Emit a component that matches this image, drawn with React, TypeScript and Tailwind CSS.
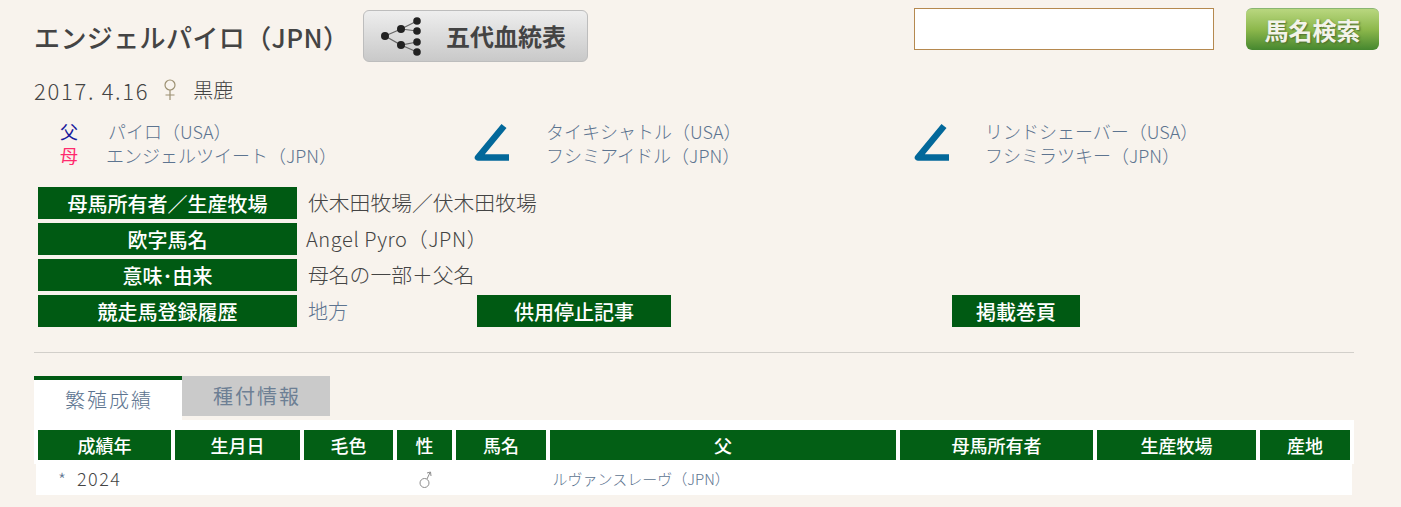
import React from "react";

const font = { fontFamily: '"Noto Sans CJK JP", sans-serif' };

const columns = [
  { label: "成績年", w: "w-[133px]" },
  { label: "生月日", w: "w-[125px]" },
  { label: "毛色", w: "w-[89px]" },
  { label: "性", w: "w-[55px]" },
  { label: "馬名", w: "w-[90px]" },
  { label: "父", w: "w-[346px]" },
  { label: "母馬所有者", w: "w-[193px]" },
  { label: "生産牧場", w: "w-[159px]" },
  { label: "産地", w: "w-[90px]" },
];

function Angle() {
  return (
    <svg width="36" height="40" viewBox="0 0 36 40" className="shrink-0">
      <path d="M31 3 L5 34.5 H36" fill="none" stroke="#03689a" strokeWidth="6.5" strokeLinejoin="round" />
    </svg>
  );
}

function Tree() {
  const ends = [[37, 7], [37, 17], [37, 28], [37, 38]];
  return (
    <svg width="42" height="44" viewBox="0 0 42 44" className="shrink-0">
      <path d="M5 22 L21 15 L37 7 M21 15 L37 17 M5 22 L21 31 L37 28 M21 31 L37 38" fill="none" stroke="#666" strokeWidth="1.2" />
      <g fill="#222">
        <circle cx="5" cy="22" r="4" />
        <circle cx="21" cy="15" r="4" />
        <circle cx="21" cy="31" r="4" />
        {ends.map(([x, y]) => (
          <circle key={y} cx={x} cy={y} r="3.8" />
        ))}
      </g>
    </svg>
  );
}

function Female() {
  return (
    <svg width="14" height="22" viewBox="0 0 14 22" className="shrink-0">
      <g fill="none" stroke="#9c9072" strokeWidth="1.2">
        <circle cx="7" cy="6" r="5" />
        <path d="M7 11 V21 M2.5 16 H11.5" />
      </g>
    </svg>
  );
}

function Male() {
  return (
    <svg width="14" height="18" viewBox="0 0 14 18" className="shrink-0">
      <g fill="none" stroke="#8c8c8c" strokeWidth="1">
        <circle cx="5.5" cy="12" r="4.5" />
        <path d="M8 8 L11 1.5 M8 2 L11.5 1 L12 5" />
      </g>
    </svg>
  );
}

function Label({ children, w }: { children: React.ReactNode; w: string }) {
  return (
    <div className={`${w} h-8 bg-[#005a13] text-white text-[20px] font-medium flex items-center justify-center shrink-0 pt-[2px] whitespace-nowrap`}>
      {children}
    </div>
  );
}

function Pair({ top, bottom, className }: { top: string; bottom: string; className: string }) {
  return (
    <div className={`${className} text-[18px] font-light leading-[24px] text-[#5d7490] whitespace-nowrap`}>
      <div>{top}</div>
      <div>{bottom}</div>
    </div>
  );
}

export default function App() {
  return (
    <div style={font} className="w-[1401px] h-[507px] overflow-hidden bg-[#f8f3ed] text-[#444]">
      <div className="flex items-start pl-[34px] pt-2">
        <h1 className="w-[329px] text-[26px] font-medium leading-[58px] tracking-[0.4px] text-[#444] whitespace-nowrap">
          {"エンジェルパイロ\uFF08JPN\uFF09"}
        </h1>
        <button className="w-[225px] h-[52px] mt-[2px] rounded-[6px] border border-[#bdbdbd] bg-gradient-to-b from-[#eeeeee] to-[#c9c9c9] flex items-center pl-[16px]">
          <Tree />
          <span className="ml-[24px] text-[24px] font-bold text-[#444] whitespace-nowrap">五代血統表</span>
        </button>
        <input aria-label="馬名" className="ml-[326px] w-[300px] h-[42px] bg-white border border-[#b5894f]" />
        <button className="ml-[32px] w-[133px] h-[42px] rounded-[6px] bg-gradient-to-b from-[#b9d77f] via-[#8db84c] to-[#45872f] border-t border-[#8ab672] text-[#f3f3ea] text-[24px] font-bold [text-shadow:1px_1px_2px_#4a6a2a]">
          馬名検索
        </button>
      </div>

      <div className="flex items-center pl-[34px] mt-[9px] h-[30px] text-[22px] font-light whitespace-nowrap">
        <span className="tracking-[1.7px]">2017. 4.16</span>
        <span className="ml-[14px]"><Female /></span>
        <span className="ml-[16px] text-[20px]">黒鹿</span>
      </div>

      <div className="flex items-center h-[48px] mt-[14px]">
        <div className="pl-[60px] w-[106px] text-[18px] leading-[24px] font-normal shrink-0">
          <div className="text-[#1a1a9c]">父</div>
          <div className="text-[#ff2a6d]">母</div>
        </div>
        <div className="w-[367px] text-[18px] font-light leading-[24px] text-[#5d7490] whitespace-nowrap shrink-0">
          <div className="pl-[2px]">{"パイロ\uFF08USA\uFF09"}</div>
          <div>{"エンジェルツイート\uFF08JPN\uFF09"}</div>
        </div>
        <Angle />
        <Pair className="ml-[37px] w-[367px] shrink-0" top={"タイキシャトル\uFF08USA\uFF09"} bottom={"フシミアイドル\uFF08JPN\uFF09"} />
        <Angle />
        <Pair className="ml-[36px]" top={"リンドシェーバー\uFF08USA\uFF09"} bottom={"フシミラツキー\uFF08JPN\uFF09"} />
      </div>

      <div className="flex flex-col gap-1 pl-[38px] mt-[20px] text-[20.8px] font-light">
        <div className="flex items-center">
          <Label w="w-[259px]">{"母馬所有者\uFF0F生産牧場"}</Label>
          <span className="ml-[11px]">{"伏木田牧場\uFF0F伏木田牧場"}</span>
        </div>
        <div className="flex items-center">
          <Label w="w-[259px]">欧字馬名</Label>
          <span className="ml-[9px] text-[20px] tracking-[0.6px]">{"Angel Pyro\uFF08JPN\uFF09"}</span>
        </div>
        <div className="flex items-center">
          <Label w="w-[259px]">{"意味\uFF65由来"}</Label>
          <span className="ml-[11px]">{"母名の一部\uFF0B父名"}</span>
        </div>
        <div className="flex items-center">
          <Label w="w-[259px]">競走馬登録履歴</Label>
          <span className="ml-[11px] w-[169px] text-[20px] text-[#5d7490]">地方</span>
          <Label w="w-[194px]">供用停止記事</Label>
          <div className="w-[281px]" />
          <Label w="w-[128px]">掲載巻頁</Label>
        </div>
      </div>

      <div className="ml-[34px] w-[1320px] mt-[25px] border-t border-[#d2cfca]" />

      <div className="flex items-start ml-[34px] mt-[23px]">
        <div className="w-[148px] h-[44px] border-t-4 border-[#005a13] bg-white text-[20px] font-light tracking-[2px] text-[#5d7490] flex items-center justify-center pl-[2px]">
          繁殖成績
        </div>
        <div className="w-[148px] h-[40px] bg-[#cacaca] text-[20px] font-normal tracking-[2px] text-[#6d7f94] flex items-center justify-center pl-[2px]">
          種付情報
        </div>
      </div>

      <div className="ml-[34px] w-[1320px] bg-white pt-[10px] pb-[4px] pl-[4px]">
        <div className="flex gap-[4px]">
          {columns.map((c) => (
            <div key={c.label} className={`${c.w} h-[30px] bg-[#035f15] text-white text-[18px] font-medium flex items-center justify-center`}>
              {c.label}
            </div>
          ))}
        </div>
      </div>
      <div className="ml-[36px] w-[1316px] h-[31px] bg-white flex items-center text-[18px] font-light whitespace-nowrap">
        <span className="ml-[22px] text-[#5d7490]">*</span>
        <span className="ml-[11px] tracking-[1.5px] -mt-[2px]">2024</span>
        <span className="ml-[297px]"><Male /></span>
        <span className="ml-[120px] text-[15px] text-[#5d7490]">{"ルヴァンスレーヴ\uFF08JPN\uFF09"}</span>
      </div>
    </div>
  );
}
